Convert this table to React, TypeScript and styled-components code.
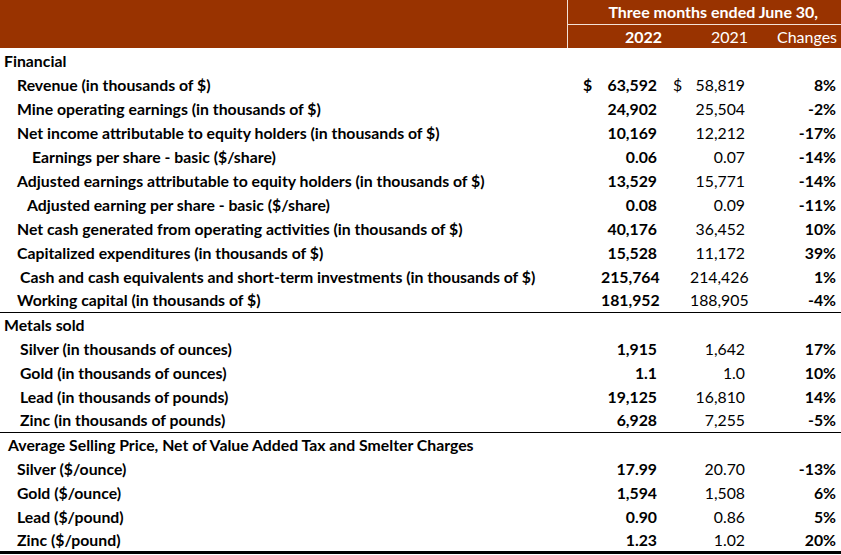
import React from "react";
import styled, { createGlobalStyle } from "styled-components";

const Global = createGlobalStyle`
  html, body { margin: 0; padding: 0; background: #fff; }
  body { font-family: Lato, "Open Sans", "Liberation Sans", sans-serif; }
`;

const Table = styled.table`
  width: 841px;
  border-collapse: collapse;
  table-layout: fixed;
  font-size: 15.8px;
  color: #000;
`;

const HeadCell = styled.th<{
  $align?: string;
  $weight?: number;
  $divider?: boolean;
  $underline?: boolean;
  $padR?: number;
  $padL?: number;
}>`
  background: #993300;
  color: #fff;
  height: 24px;
  font-size: 16px;
  padding: 0 ${(p) => p.$padR ?? 0}px 0 ${(p) => p.$padL ?? 0}px;
  box-sizing: border-box;
  text-align: ${(p) => p.$align || "right"};
  font-weight: ${(p) => p.$weight ?? 700};
  white-space: nowrap;
  border-right: ${(p) => (p.$divider ? "1px solid #f3e1d6" : "none")};
  border-bottom: ${(p) => (p.$underline ? "1px solid #f3e1d6" : "none")};
`;

const Row = styled.tr<{ $top?: boolean; $bottom?: boolean }>`
  height: 24px;
  border-top: ${(p) => (p.$top ? "1px solid #000" : "none")};
  border-bottom: ${(p) => (p.$bottom ? "3px solid #000" : "none")};
`;

const Label = styled.td<{ $indent: number }>`
  padding: 0 0 0 ${(p) => p.$indent}px;
  font-weight: 700;
  white-space: nowrap;
`;

const Dollar = styled.td<{ $bold?: boolean; $pad: number }>`
  padding: 0 0 0 ${(p) => p.$pad}px;
  font-weight: ${(p) => (p.$bold ? 700 : 400)};
  text-align: left;
`;

const Num = styled.td<{ $bold?: boolean }>`
  padding: 0 5px 0 0;
  text-align: right;
  font-weight: ${(p) => (p.$bold ? 700 : 400)};
  white-space: nowrap;
`;

type Item = {
  label: string;
  indent: number;
  section?: boolean;
  top?: boolean;
  dollar?: boolean;
  a?: string;
  b?: string;
  c?: string;
};

const rows: Item[] = [
  { label: "Financial", indent: 4, section: true },
  { label: "Revenue (in thousands of $)", indent: 17, dollar: true, a: "63,592", b: "58,819", c: "8%" },
  { label: "Mine operating earnings (in thousands of $)", indent: 17, a: "24,902", b: "25,504", c: "-2%" },
  { label: "Net income attributable to equity holders (in thousands of $)", indent: 17, a: "10,169", b: "12,212", c: "-17%" },
  { label: "Earnings per share - basic ($/share)", indent: 32, a: "0.06", b: "0.07", c: "-14%" },
  { label: "Adjusted earnings attributable to equity holders (in thousands of $)", indent: 17, a: "13,529", b: "15,771", c: "-14%" },
  { label: "Adjusted earning per share - basic ($/share)", indent: 27, a: "0.08", b: "0.09", c: "-11%" },
  { label: "Net cash generated from operating activities (in thousands of $)", indent: 17, a: "40,176", b: "36,452", c: "10%" },
  { label: "Capitalized expenditures (in thousands of $)", indent: 17, a: "15,528", b: "11,172", c: "39%" },
  { label: "Cash and cash equivalents and short-term investments (in thousands of $)", indent: 20, a: "215,764", b: "214,426", c: "1%" },
  { label: "Working capital (in thousands of $)", indent: 17, a: "181,952", b: "188,905", c: "-4%" },
  { label: "Metals sold", indent: 4, section: true, top: true },
  { label: "Silver (in thousands of ounces)", indent: 20, a: "1,915", b: "1,642", c: "17%" },
  { label: "Gold (in thousands of ounces)", indent: 20, a: "1.1", b: "1.0", c: "10%" },
  { label: "Lead (in thousands of pounds)", indent: 20, a: "19,125", b: "16,810", c: "14%" },
  { label: "Zinc (in thousands of pounds)", indent: 20, a: "6,928", b: "7,255", c: "-5%" },
  { label: "Average Selling Price, Net of Value Added Tax and Smelter Charges", indent: 8, section: true, top: true },
  { label: "Silver ($/ounce)", indent: 17, a: "17.99", b: "20.70", c: "-13%" },
  { label: "Gold ($/ounce)", indent: 17, a: "1,594", b: "1,508", c: "6%" },
  { label: "Lead ($/pound)", indent: 17, a: "0.90", b: "0.86", c: "5%" },
  { label: "Zinc ($/pound)", indent: 17, a: "1.23", b: "1.02", c: "20%" },
];

export default function App() {
  return (
    <>
      <Global />
      <Table>
        <colgroup>
          <col style={{ width: 567 }} />
          <col style={{ width: 34 }} />
          <col style={{ width: 61 }} />
          <col style={{ width: 28 }} />
          <col style={{ width: 60 }} />
          <col style={{ width: 91 }} />
        </colgroup>
        <thead>
          <tr>
            <HeadCell rowSpan={2} $divider />
            <HeadCell colSpan={5} $align="center" $underline $padL={18}>
              Three months ended June 30,
            </HeadCell>
          </tr>
          <tr>
            <HeadCell colSpan={2}>2022</HeadCell>
            <HeadCell colSpan={2} $weight={400} $padR={2}>2021</HeadCell>
            <HeadCell $weight={400} $padR={4}>Changes</HeadCell>
          </tr>
        </thead>
        <tbody>
          {rows.map((r, i) => (
            <Row key={i} $top={r.top} $bottom={i === rows.length - 1}>
              {r.section ? (
                <Label $indent={r.indent} colSpan={6}>
                  {r.label}
                </Label>
              ) : (
                <>
                  <Label $indent={r.indent}>{r.label}</Label>
                  <Dollar $bold $pad={16}>{r.dollar ? "$" : ""}</Dollar>
                  <Num $bold>{r.a}</Num>
                  <Dollar $pad={11}>{r.dollar ? "$" : ""}</Dollar>
                  <Num>{r.b}</Num>
                  <Num $bold>{r.c}</Num>
                </>
              )}
            </Row>
          ))}
        </tbody>
      </Table>
    </>
  );
}
